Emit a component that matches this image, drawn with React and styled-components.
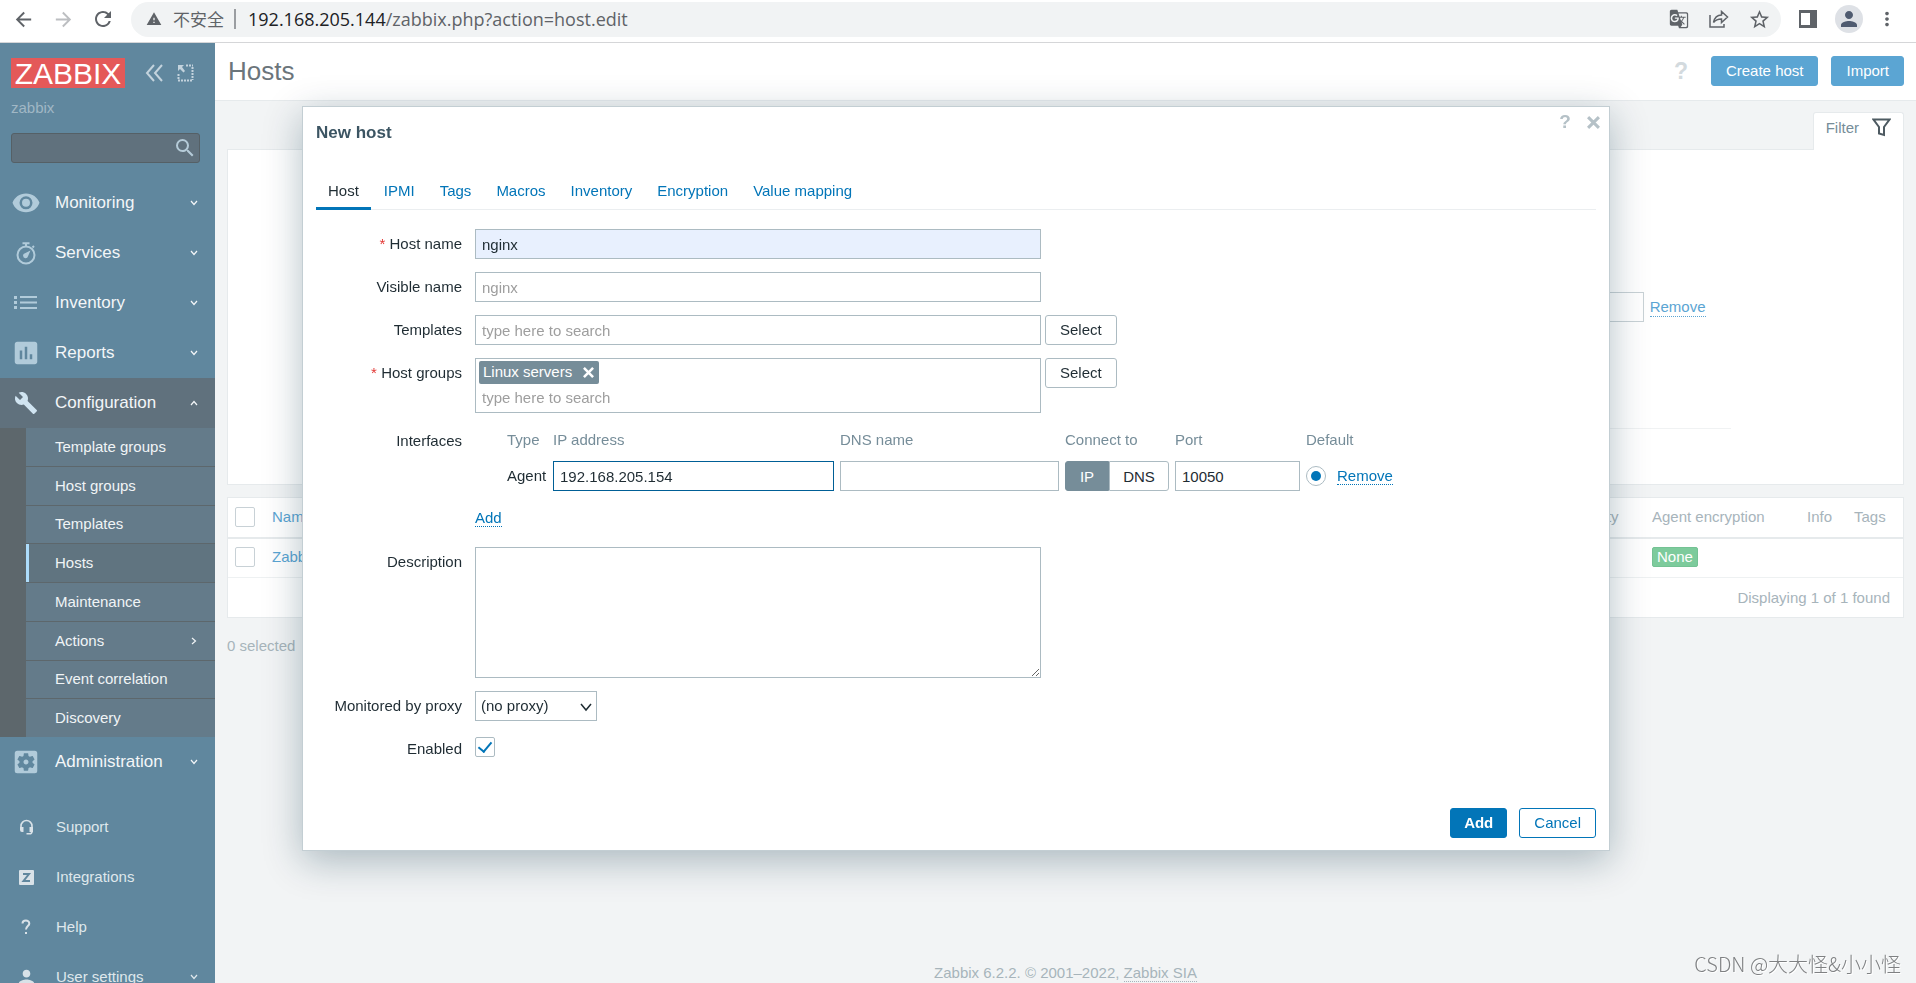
import React, { useState } from 'react';
import styled, { createGlobalStyle, css } from 'styled-components';
import {
  MdArrowBack,
  MdArrowForward,
  MdAssessment,
  MdBuild,
  MdGTranslate,
  MdMoreVert,
  MdPerson,
  MdRefresh,
  MdSearch,
  MdSettingsApplications,
  MdStarBorder,
  MdWarning,
} from 'react-icons/md';

const GlobalStyle = createGlobalStyle`
  * {
    box-sizing: border-box;
  }

  body {
    margin: 0;
    color: #1f2c33;
    font-family: "Liberation Sans", Arial, sans-serif;
    font-size: 15px;
    line-height: 20px;
  }

  input, select, textarea, button {
    font: inherit;
    color: inherit;
    margin: 0;
  }

  a {
    color: inherit;
    text-decoration: none;
  }
`;

const Page = styled.div`
  display: flex;
  flex-direction: column;
  height: 100vh;
  overflow: hidden;
`;

/* Browser bar */

const BrowserBar = styled.div`
  display: flex;
  flex: none;
  align-items: center;
  height: 43px;
  padding: 0 18px 4px 11px;
  border-bottom: 1px solid #d5d6d8;
  background: #fff;
  color: #5f6368;
`;

const BarButton = styled.button`
  display: flex;
  align-items: center;
  justify-content: center;
  flex: none;
  width: ${({ $width }) => $width || 40}px;
  height: 30px;
  padding: 0;
  border: 0;
  background: none;
  color: ${({ $muted }) => ($muted ? '#bcbec1' : '#5f6368')};
`;

const NavButtons = styled.div`
  display: flex;
  flex: none;
  width: 120px;
  margin-left: -8px;
  margin-right: 8px;
`;

const Omnibox = styled.div`
  display: flex;
  flex: 1;
  align-items: center;
  height: 35px;
  padding: 0 2px 0 15px;
  border-radius: 18px;
  background: #f1f3f4;
  font-family: "Open Sans", "Noto Sans CJK SC", sans-serif;
  font-size: 18px;
  white-space: nowrap;
`;

const Insecure = styled.span`
  padding: 0 8px 0 11px;
  font-family: "Noto Sans CJK SC", sans-serif;
  font-size: 17px;
`;

const Divider = styled.span`
  width: 2px;
  height: 20px;
  margin: 0 12px 0 2px;
  background: #9a9da1;
`;

const Address = styled.span`
  flex: 1;

  b {
    color: #202124;
    font-weight: 400;
  }
`;

const Avatar = styled.span`
  display: flex;
  align-items: center;
  justify-content: center;
  flex: none;
  width: 28px;
  height: 28px;
  margin-right: 13px;
  border-radius: 50%;
  background: #dee1e6;
  color: #4f5b70;
`;

/* Sidebar */

const Workspace = styled.div`
  display: flex;
  flex: 1;
  min-height: 0;
`;

const Sidebar = styled.aside`
  flex: none;
  width: 215px;
  overflow: hidden;
  background: #60879e;
  color: #f0f4f6;
`;

const Brand = styled.div`
  display: flex;
  align-items: center;
  padding: 15px 11px 0;
`;

const Logo = styled.a`
  flex: none;
  width: 114px;
  height: 30px;
  margin-right: 8px;
  background: #e45959;
  color: #fff;
  font-size: 30px;
  line-height: 31px;
  text-align: center;
`;

const BrandButton = styled.button`
  display: flex;
  flex: none;
  width: 20px;
  height: 20px;
  margin-left: 12px;
  padding: 1px 0;
  border: 0;
  background: none;
  color: #c3d3dd;
`;

const ServerName = styled.div`
  padding: 10px 11px 15px;
  color: #a0b7c5;
`;

const SearchBox = styled.form`
  display: flex;
  align-items: center;
  height: 30px;
  margin: 0 15px 15px 11px;
  border: 1px solid #556066;
  border-radius: 3px;
  background: #60717d;

  input {
    flex: 1;
    min-width: 0;
    padding: 0 6px;
    border: 0;
    outline: 0;
    background: none;
  }

  button {
    display: flex;
    padding: 0 2px 0 0;
    border: 0;
    background: none;
    color: #b5cbd8;
  }
`;

const MenuLink = styled.a`
  display: flex;
  align-items: center;
  height: 50px;
  padding-right: 17px;
  font-size: ${({ $small }) => ($small ? 15 : 17)}px;
  color: ${({ $small }) => ($small ? '#dfe7ec' : '#f3f6f8')};
  background: ${({ $open }) => ($open ? '#60717d' : 'none')};
`;

const MenuIcon = styled.span`
  display: flex;
  justify-content: center;
  width: 52px;
  margin-right: ${({ $small }) => ($small ? 4 : 3)}px;
  color: ${({ $color }) => $color || '#b1cbda'};
`;

const MenuText = styled.span`
  flex: 1;
`;

const SubMenu = styled.nav`
  display: flex;
  flex-direction: column;
  gap: 1px;
  height: 309px;
  padding-left: 26px;
  background: #5d676c;
`;

const SubLink = styled.a`
  display: flex;
  flex: 1;
  align-items: center;
  padding: 0 18px 0 ${({ $active }) => ($active ? 26 : 29)}px;
  border-left: ${({ $active }) => ($active ? '3px solid #addcfb' : '0')};
  background: ${({ $active }) => ($active ? '#607480' : '#647b8a')};
`;

const UserMenu = styled.nav`
  margin-top: 15px;
`;

/* Page behind the dialog */

const Main = styled.main`
  display: flex;
  flex: 1;
  flex-direction: column;
  min-width: 0;
  background: #f2f4f5;
`;

const PageHeader = styled.header`
  display: flex;
  align-items: center;
  height: 58px;
  padding: 0 12px 2px 13px;
  border-bottom: 1px solid #e6eaec;
  background: #fff;
`;

const PageTitle = styled.h1`
  flex: 1;
  margin: 0;
  color: #6b757b;
  font-size: 26px;
  font-weight: 400;
`;

const HelpButton = styled.button`
  padding: 0;
  border: 0;
  background: none;
  color: ${({ $faded }) => ($faded ? '#d3dade' : '#b5c1c7')};
  font-size: ${({ $faded }) => ($faded ? 23 : 19)}px;
  font-weight: 700;
`;

const Button = styled.button`
  height: 30px;
  padding: 0 14px;
  border: 1px solid #0275b8;
  border-radius: 3px;
  background: #0275b8;
  color: #fff;

  ${({ $kind }) =>
    $kind === 'primary' &&
    css`
      padding: 0 13px;
      font-weight: 700;
    `}

  ${({ $kind }) =>
    $kind === 'faded' &&
    css`
      border-color: #5ba5d3;
      background: #5ba5d3;
    `}

  ${({ $kind }) =>
    $kind === 'outline' &&
    css`
      background: #fff;
      color: #0275b8;
    `}

  ${({ $kind }) =>
    $kind === 'grey' &&
    css`
      border-color: #acbbc2;
      background: #fff;
      color: #1f2c33;
    `}
`;

const HeaderActions = styled.div`
  display: flex;
  align-items: center;
  gap: 13px;
  margin-left: 23px;
`;

const Content = styled.div`
  display: flex;
  flex: 1;
  flex-direction: column;
  padding: 11px 12px 0;
  color: #a7b4bb;
`;

const FilterTab = styled.a`
  position: relative;
  display: flex;
  align-items: flex-start;
  gap: 13px;
  align-self: flex-end;
  height: 38px;
  margin-bottom: -1px;
  padding: 5px 12px;
  border: 1px solid #e6eaec;
  border-bottom: 0;
  border-radius: 3px 3px 0 0;
  background: #fff;
  color: #768d99;
`;

const Panel = styled.section`
  margin-bottom: 12px;
  border: 1px solid #e6eaec;
  background: #fff;
`;

const FilterForm = styled.form`
  display: flex;
  justify-content: flex-end;
  align-items: center;
  gap: 6px;
  max-width: 1330px;
  margin: 0 auto 55px;
  padding: 142px 25px 106px;
  border-bottom: 1px solid #f0f2f3;

  input {
    width: 250px;
    height: 30px;
    border: 1px solid #c9d2d6;
  }
`;

const DottedLink = styled.a`
  border-bottom: 1px dotted currentColor;
  line-height: 18px;
  color: ${({ $faded }) => ($faded ? '#5ba5d3' : '#0275b8')};
`;

const HostTable = styled.table`
  width: 100%;
  border-collapse: collapse;
  table-layout: fixed;

  th, td {
    height: 40px;
    padding: 0 7px 1px;
    font-weight: 400;
    text-align: left;
    border-bottom: 1px solid #eef1f2;
  }

  th {
    border-bottom: 2px solid #e6eaec;
  }

  tbody td {
    height: 39px;
    padding-bottom: 2px;
  }

  tfoot td {
    border: 0;
    padding: 1px 13px 0;
    text-align: right;
  }

  a {
    color: #5ba5d3;
  }
`;

const Col = styled.col`
  width: ${({ $width }) => ($width ? `${$width}px` : 'auto')};
`;

const Badge = styled.span`
  display: inline-block;
  padding: 0 4px;
  border: 1px solid #74c294;
  border-radius: 2px;
  background: #7dcb9c;
  color: #fff;
  line-height: 18px;
`;

const Selected = styled.div`
  margin-top: 6px;
`;

const Copyright = styled.footer`
  margin-top: auto;
  text-align: center;
`;

const FadedLink = styled.a`
  border-bottom: 1px dotted currentColor;
`;

/* Dialog */

const Overlay = styled.div`
  position: fixed;
  inset: 0;
  padding: 106px 306px 0 302px;
`;

const Dialog = styled.section`
  padding: 0 13px 12px;
  border: 1px solid #c3ced3;
  background: #fff;
  box-shadow: 0 10px 36px rgba(8, 48, 66, 0.3);
`;

const DialogHeader = styled.div`
  display: flex;
  justify-content: space-between;
  align-items: flex-start;
  height: 52px;
  margin-right: -6px;

  h2 {
    margin: 0;
    color: #3c5563;
    font-size: 17px;
    line-height: 52px;
  }
`;

const DialogActions = styled.div`
  display: flex;
  gap: 10px;
  padding-top: 5px;

  button {
    display: flex;
    justify-content: center;
    align-items: center;
    width: 18px;
    height: 20px;
  }
`;

const CloseButton = styled.button`
  padding: 0;
  border: 0;
  background: none;
  color: #b5c1c7;
`;

const Tabs = styled.nav`
  display: flex;
  gap: 1px;
  margin-top: 13px;
  box-shadow: inset 0 -1px #ebeef0;
`;

const Tab = styled.a`
  height: 38px;
  padding: 0 12px;
  line-height: 38px;
  color: ${({ $active }) => ($active ? '#1f2c33' : '#0275b8')};
  box-shadow: ${({ $active }) => ($active ? 'inset 0 -3px #0275b8' : 'none')};
`;

const HostForm = styled.form`
  display: grid;
  grid-template-columns: 146px 1fr;
  gap: 13px;
  padding-top: 19px;
`;

const Label = styled.label`
  line-height: 30px;
  text-align: right;

  &::before {
    content: ${({ $required }) => ($required ? '"* "' : 'none')};
    color: #e33734;
  }
`;

const Field = styled.div`
  display: flex;
  align-items: flex-start;
  gap: 4px;
`;

const Input = styled.input`
  width: ${({ $width }) => ($width ? `${$width}px` : '100%')};
  height: 30px;
  padding: 1px 6px 0;
  border: 1px solid ${({ $focused }) => ($focused ? '#005f96' : '#acbbc2')};
  border-radius: 0;
  outline: 0;
  background: ${({ $autofill }) => ($autofill ? '#e8f0fe' : '#fff')};

  &::placeholder {
    color: #9e9e9e;
  }
`;

const Multiselect = styled.div`
  width: 566px;
  padding: 2px 3px;
  border: 1px solid #acbbc2;

  input {
    display: block;
    width: 100%;
    height: 26px;
    padding: 0 3px;
    border: 0;
    outline: 0;
  }

  input::placeholder {
    color: #9e9e9e;
  }
`;

const Chip = styled.span`
  display: inline-flex;
  align-items: center;
  gap: 11px;
  height: 23px;
  padding: 0 5px 1px 4px;
  border-radius: 2px;
  background: #768d99;
  color: #fff;
  vertical-align: top;

  button {
    display: flex;
    padding: 0;
    border: 0;
    background: none;
  }
`;

const Interfaces = styled.div`
  padding-left: 32px;
`;

const InterfaceTable = styled.table`
  width: 892px;
  border-collapse: collapse;
  table-layout: fixed;

  th {
    padding: 0 0 7px;
    color: #768d99;
    font-weight: 400;
    line-height: 28px;
    text-align: left;
  }

  td {
    padding: 0 6px 0 0;
    white-space: nowrap;
  }

  td:last-child {
    padding: 0;
  }
`;

const AddRow = styled.div`
  height: 30px;
  margin: 13px 0 0 -32px;
  line-height: 28px;
`;

const Segments = styled.div`
  display: flex;
  height: 30px;
`;

const Segment = styled.label`
  flex: ${({ $grow }) => ($grow ? 1 : 'none')};
  width: 44px;
  border: 1px solid ${({ $on }) => ($on ? '#768d99' : '#acbbc2')};
  border-radius: ${({ $grow }) => ($grow ? '0 3px 3px 0' : '3px 0 0 3px')};
  background: ${({ $on }) => ($on ? '#768d99' : '#fff')};
  color: ${({ $on }) => ($on ? '#fff' : '#1f2c33')};
  line-height: 30px;
  text-align: center;

  input {
    appearance: none;
    display: none;
  }
`;

const Radio = styled.input`
  appearance: none;
  display: grid;
  place-items: center;
  width: 20px;
  height: 20px;
  border: 1px solid #acbbc2;
  border-radius: 50%;

  &:checked::before {
    content: "";
    width: 10px;
    height: 10px;
    border-radius: 50%;
    background: #0275b8;
  }
`;

const Checkbox = styled.input`
  appearance: none;
  display: grid;
  place-items: center;
  width: 20px;
  height: 20px;
  margin-top: ${({ $lowered }) => ($lowered ? 3 : 0)}px;
  border: 1px solid ${({ $faded }) => ($faded ? '#c8d1d6' : '#acbbc2')};
  border-radius: 2px;
  background: #fff;

  &:checked::before {
    content: "";
    width: 6px;
    height: 11px;
    margin-bottom: 3px;
    border: solid #0275b8;
    border-width: 0 2px 2px 0;
    transform: rotate(40deg);
  }
`;

const TextArea = styled.textarea`
  display: block;
  width: 566px;
  height: 131px;
  padding: 5px 6px;
  border: 1px solid #acbbc2;
  outline: 0;
  resize: both;
`;

const SelectWrap = styled.div`
  position: relative;
  width: 122px;

  select {
    width: 100%;
    height: 30px;
    padding: 0 5px;
    border: 1px solid #acbbc2;
    border-radius: 0;
    appearance: none;
    background: #fff;
  }

  svg {
    position: absolute;
    top: 12px;
    right: 5px;
    pointer-events: none;
  }
`;

const DialogFooter = styled.div`
  display: flex;
  justify-content: flex-end;
  gap: 12px;
  margin-top: 44px;
`;

const Watermark = styled.div`
  position: fixed;
  right: 15px;
  bottom: 6px;
  color: #7f8183;
  font-family: "Noto Sans CJK SC", sans-serif;
  font-size: 20px;
  font-weight: 300;
  line-height: 26px;
  text-shadow: 1px 1px #fff;
`;

/* Icons */

const Chevron = ({ points = '1,1 4,4.5 7,1', width = 8, height = 6, stroke = 1.2 }) => (
  <svg width={width} height={height} fill="none" stroke="currentColor" strokeWidth={stroke}>
    <polyline points={points} />
  </svg>
);

const Cross = ({ size = 13, stroke = 2.8 }) => (
  <svg width={size} height={size} viewBox="0 0 12 12" stroke="currentColor" strokeWidth={stroke}>
    <path d="M1 1l10 10M11 1L1 11" />
  </svg>
);

const EyeIcon = () => (
  <svg width="28" height="20" viewBox="0 0 28 20">
    <path
      fill="currentColor"
      fillRule="evenodd"
      d="M14 0.5C7.6 0.5 2.5 4.3 0.5 9.8C2.5 15.5 7.6 19.3 14 19.3S25.5 15.5 27.5 9.8C25.5 4.3 20.4 0.5 14 0.5ZM14 16.3A6.5 6.5 0 1 1 14 3.3A6.5 6.5 0 0 1 14 16.3Z"
    />
    <circle cx="14" cy="9.8" r="4" fill="currentColor" />
  </svg>
);

const StopwatchIcon = () => (
  <svg width="20" height="23" viewBox="0 0 20 23" fill="none" stroke="currentColor">
    <circle cx="10" cy="13" r="8.5" strokeWidth="2" />
    <path d="M6.5 1.2h7M10 1.5v3M16.5 5.5l1.5-1.5" strokeWidth="2" />
    <path d="M14.5 8.5L12 14.2A2.5 2.5 0 1 1 9 11.2Z" fill="currentColor" stroke="none" />
  </svg>
);

const ListIcon = () => (
  <svg width="24" height="14" fill="currentColor">
    <path d="M0 0h3v3H0zM0 5h3v3H0zM0 10h3v3H0zM6 0h17v2H6zM6 5.5h17v2H6zM6 11h17v2H6z" />
  </svg>
);

const KioskIcon = () => (
  <svg width="17" height="18" viewBox="0 0 17 18" fill="none" stroke="currentColor">
    <path d="M9 1.5h7M15.5 3v13M1.5 10v6M1 16.5h15" strokeWidth="2" strokeDasharray="2 1" />
    <path d="M1 1h6L5 3l3 4-1.5 1.5L3 5 1 7z" fill="currentColor" stroke="none" />
  </svg>
);

const HeadsetIcon = () => (
  <svg width="15" height="16" viewBox="0 0 15 16">
    <path
      d="M2 9V7a5.5 5.5 0 0 1 11 0v5.5c0 1.5-1 2.3-2.5 2.3H7.5"
      fill="none"
      stroke="currentColor"
      strokeWidth="1.6"
    />
    <path d="M1 8h3.5v5H3a2 2 0 0 1-2-2zM10.500 8H14v5h-3.500z" fill="currentColor" />
  </svg>
);

const ZIcon = () => (
  <svg width="15" height="15" viewBox="0 0 15 15">
    <rect width="15" height="15" rx="1" fill="currentColor" />
    <path d="M4 4h6L4.5 11H11" fill="none" stroke="#60879e" strokeWidth="2" />
  </svg>
);

const QuestionIcon = () => (
  <svg width="10" height="16" viewBox="0 0 10 16" fill="none" stroke="currentColor" strokeWidth="2">
    <path d="M1.5 4.5C1.5 0.5 8.3 0.5 8.3 4.5C8.3 7 5 7.3 5 10.5M5 13v2" />
  </svg>
);

const ShareIcon = () => (
  <svg width="20" height="18" viewBox="0 0 20 18" fill="none" stroke="currentColor" strokeWidth="1.5">
    <path d="M1 5v12h14v-3" />
    <path d="M4.5 12.5C5.5 7.5 8.5 5 12.5 5V1.5L18.5 7l-6 5.5V9C9 9 6.5 10 4.5 12.5Z" />
  </svg>
);

const SidePanelIcon = () => (
  <svg width="18" height="18" viewBox="0 0 18 18">
    <path d="M0 0h18v18H0zM2 3v12h9V3z" fill="currentColor" fillRule="evenodd" />
  </svg>
);

const FunnelIcon = () => (
  <svg width="19" height="19" viewBox="0 0 19 19" fill="none" stroke="#4d5a61" strokeWidth="2">
    <path d="M1.5 1.5h16L12 9v8l-5-1.5V9z" />
  </svg>
);

const sections = [
  { name: 'Monitoring', icon: <EyeIcon /> },
  { name: 'Services', icon: <StopwatchIcon /> },
  { name: 'Inventory', icon: <ListIcon /> },
  { name: 'Reports', icon: <MdAssessment size={30} /> },
];

const configuration = [
  'Template groups',
  'Host groups',
  'Templates',
  'Hosts',
  'Maintenance',
  'Actions',
  'Event correlation',
  'Discovery',
];

const userLinks = [
  { name: 'Support', icon: <HeadsetIcon /> },
  { name: 'Integrations', icon: <ZIcon /> },
  { name: 'Help', icon: <QuestionIcon /> },
  { name: 'User settings', icon: <MdPerson size={23} />, more: true },
];

const tabs = ['Host', 'IPMI', 'Tags', 'Macros', 'Inventory', 'Encryption', 'Value mapping'];

const Browser = () => (
  <BrowserBar>
    <NavButtons>
      <BarButton aria-label="Back"><MdArrowBack size={23} /></BarButton>
      <BarButton aria-label="Forward" $muted><MdArrowForward size={23} /></BarButton>
      <BarButton aria-label="Reload"><MdRefresh size={24} /></BarButton>
    </NavButtons>
    <Omnibox>
      <MdWarning size={16} />
      <Insecure>不安全</Insecure>
      <Divider />
      <Address><b>192.168.205.144</b>/zabbix.php?action=host.edit</Address>
      <BarButton aria-label="Translate"><MdGTranslate size={20} /></BarButton>
      <BarButton aria-label="Share"><ShareIcon /></BarButton>
      <BarButton aria-label="Bookmark"><MdStarBorder size={23} /></BarButton>
    </Omnibox>
    <BarButton aria-label="Side panel" $width={54}><SidePanelIcon /></BarButton>
    <Avatar><MdPerson size={24} /></Avatar>
    <BarButton aria-label="More" $width={22}><MdMoreVert size={24} /></BarButton>
  </BrowserBar>
);

const Navigation = () => (
  <Sidebar>
    <Brand>
      <Logo href="#">ZABBIX</Logo>
      <BrandButton aria-label="Collapse">
        <svg width="20" height="18" fill="none" stroke="currentColor" strokeWidth="2">
          <path d="M9 1L2 9l7 8M17 1l-7 8 7 8" />
        </svg>
      </BrandButton>
      <BrandButton aria-label="Kiosk mode"><KioskIcon /></BrandButton>
    </Brand>
    <ServerName>zabbix</ServerName>
    <SearchBox>
      <input aria-label="Search" />
      <button type="button" aria-label="Search"><MdSearch size={24} /></button>
    </SearchBox>
    <nav>
      {sections.map(({ name, icon }) => (
        <MenuLink key={name} href="#">
          <MenuIcon>{icon}</MenuIcon>
          <MenuText>{name}</MenuText>
          <Chevron />
        </MenuLink>
      ))}
      <MenuLink href="#" $open>
        <MenuIcon $color="#d0e4f1"><MdBuild size={24} /></MenuIcon>
        <MenuText>Configuration</MenuText>
        <Chevron points="1,5 4,1.5 7,5" />
      </MenuLink>
      <SubMenu>
        {configuration.map((name) => (
          <SubLink key={name} href="#" $active={name === 'Hosts'}>
            <MenuText>{name}</MenuText>
            {name === 'Actions' && <Chevron points="1,1 4.5,4 1,7" width={6} height={8} />}
          </SubLink>
        ))}
      </SubMenu>
      <MenuLink href="#">
        <MenuIcon><MdSettingsApplications size={30} /></MenuIcon>
        <MenuText>Administration</MenuText>
        <Chevron />
      </MenuLink>
    </nav>
    <UserMenu>
      {userLinks.map(({ name, icon, more }) => (
        <MenuLink key={name} href="#" $small>
          <MenuIcon $small $color="#d9e2e8">{icon}</MenuIcon>
          <MenuText>{name}</MenuText>
          {more && <Chevron />}
        </MenuLink>
      ))}
    </UserMenu>
  </Sidebar>
);

const HostsPage = () => (
  <Main>
    <PageHeader>
      <PageTitle>Hosts</PageTitle>
      <HelpButton $faded>?</HelpButton>
      <HeaderActions>
        <Button $kind="faded">Create host</Button>
        <Button $kind="faded">Import</Button>
      </HeaderActions>
    </PageHeader>
    <Content>
      <FilterTab href="#">
        Filter
        <FunnelIcon />
      </FilterTab>
      <Panel>
        <FilterForm>
          <input aria-label="Tag value" />
          <DottedLink href="#" $faded>Remove</DottedLink>
        </FilterForm>
      </Panel>
      <Panel>
        <HostTable>
          <colgroup>
            <Col $width={37} />
            <Col />
            <Col $width={104} />
            <Col $width={155} />
            <Col $width={47} />
            <Col $width={56} />
          </colgroup>
          <thead>
            <tr>
              <th><Checkbox type="checkbox" aria-label="All hosts" $faded /></th>
              <th><a href="#">Name</a></th>
              <th>Availability</th>
              <th>Agent encryption</th>
              <th>Info</th>
              <th>Tags</th>
            </tr>
          </thead>
          <tbody>
            <tr>
              <td><Checkbox type="checkbox" aria-label="Zabbix server" $faded /></td>
              <td><a href="#">Zabbix server</a></td>
              <td />
              <td><Badge>None</Badge></td>
              <td />
              <td />
            </tr>
          </tbody>
          <tfoot>
            <tr>
              <td colSpan={6}>Displaying 1 of 1 found</td>
            </tr>
          </tfoot>
        </HostTable>
      </Panel>
      <Selected>0 selected</Selected>
      <Copyright>
        Zabbix 6.2.2. © 2001–2022, <FadedLink href="#">Zabbix SIA</FadedLink>
      </Copyright>
    </Content>
  </Main>
);

const NewHostDialog = () => {
  const [connect, setConnect] = useState('IP');

  return (
    <Dialog role="dialog" aria-labelledby="dialog-title">
      <DialogHeader>
        <h2 id="dialog-title">New host</h2>
        <DialogActions>
          <HelpButton>?</HelpButton>
          <CloseButton aria-label="Close"><Cross /></CloseButton>
        </DialogActions>
      </DialogHeader>
      <Tabs>
        {tabs.map((tab) => (
          <Tab key={tab} href="#" $active={tab === 'Host'}>{tab}</Tab>
        ))}
      </Tabs>
      <HostForm>
        <Label htmlFor="host" $required>Host name</Label>
        <Field><Input id="host" $width={566} $autofill defaultValue="nginx" /></Field>

        <Label htmlFor="visible">Visible name</Label>
        <Field><Input id="visible" $width={566} placeholder="nginx" /></Field>

        <Label htmlFor="templates">Templates</Label>
        <Field>
          <Input id="templates" $width={566} placeholder="type here to search" />
          <Button type="button" $kind="grey">Select</Button>
        </Field>

        <Label htmlFor="groups" $required>Host groups</Label>
        <Field>
          <Multiselect>
            <Chip>
              Linux servers
              <button type="button" aria-label="Remove Linux servers"><Cross size={11} /></button>
            </Chip>
            <input id="groups" placeholder="type here to search" />
          </Multiselect>
          <Button type="button" $kind="grey">Select</Button>
        </Field>

        <Label as="span">Interfaces</Label>
        <Interfaces>
          <InterfaceTable>
            <colgroup>
              <Col $width={46} />
              <Col $width={287} />
              <Col $width={225} />
              <Col $width={110} />
              <Col $width={131} />
              <Col $width={31} />
              <Col />
            </colgroup>
            <thead>
              <tr>
                <th>Type</th>
                <th>IP address</th>
                <th>DNS name</th>
                <th>Connect to</th>
                <th>Port</th>
                <th colSpan={2}>Default</th>
              </tr>
            </thead>
            <tbody>
              <tr>
                <td>Agent</td>
                <td><Input aria-label="IP address" $focused defaultValue="192.168.205.154" /></td>
                <td><Input aria-label="DNS name" /></td>
                <td>
                  <Segments>
                    {['IP', 'DNS'].map((kind) => (
                      <Segment key={kind} $on={connect === kind} $grow={kind === 'DNS'}>
                        <input
                          type="radio"
                          name="connect"
                          checked={connect === kind}
                          onChange={() => setConnect(kind)}
                        />
                        {kind}
                      </Segment>
                    ))}
                  </Segments>
                </td>
                <td><Input aria-label="Port" defaultValue="10050" /></td>
                <td><Radio type="radio" aria-label="Default" defaultChecked /></td>
                <td><DottedLink href="#">Remove</DottedLink></td>
              </tr>
            </tbody>
          </InterfaceTable>
          <AddRow><DottedLink href="#">Add</DottedLink></AddRow>
        </Interfaces>

        <Label htmlFor="description">Description</Label>
        <Field><TextArea id="description" /></Field>

        <Label htmlFor="proxy">Monitored by proxy</Label>
        <SelectWrap>
          <select id="proxy">
            <option>(no proxy)</option>
          </select>
          <Chevron points="1,1 6,7 11,1" width={12} height={9} stroke={1.5} />
        </SelectWrap>

        <Label htmlFor="enabled">Enabled</Label>
        <Field><Checkbox id="enabled" type="checkbox" $lowered defaultChecked /></Field>
      </HostForm>
      <DialogFooter>
        <Button $kind="primary">Add</Button>
        <Button $kind="outline">Cancel</Button>
      </DialogFooter>
    </Dialog>
  );
};

const App = () => (
  <Page>
    <GlobalStyle />
    <Browser />
    <Workspace>
      <Navigation />
      <HostsPage />
    </Workspace>
    <Overlay>
      <NewHostDialog />
    </Overlay>
    <Watermark>CSDN @大大怪&amp;小小怪</Watermark>
  </Page>
);

export default App;
